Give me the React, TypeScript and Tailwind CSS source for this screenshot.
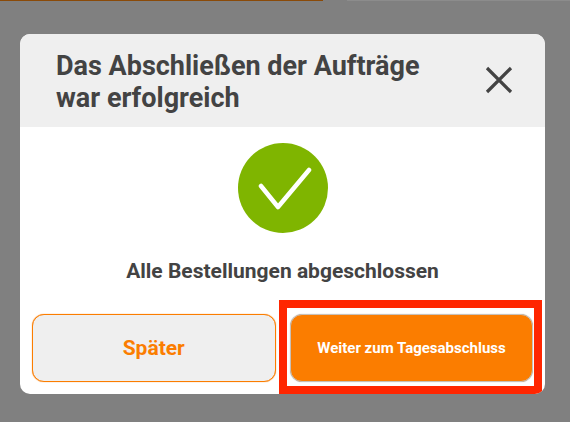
export default function App() {
  return (
    <div className="relative flex h-[422px] w-[570px] flex-col overflow-hidden bg-[#808080] font-['Roboto',sans-serif]">
      <div className="flex h-px shrink-0">
        <div className="w-[323px] bg-[#8a4a08]" />
        <div className="w-[24px]" />
        <div className="flex-1 bg-[#8c8c8c]" />
      </div>
      <div className="ml-5 mt-[33px] flex h-[360px] w-[525px] flex-col overflow-hidden rounded-[10px] bg-white">
        <div className="flex h-[93px] shrink-0 items-center justify-between bg-[#efefef] pl-9 pr-[32px]">
          <h1 className="mt-[2px] w-[390px] text-[27px] font-bold leading-8 text-[#434343]">
            Das Abschließen der Aufträge war erfolgreich
          </h1>
          <svg width="28" height="28" viewBox="0 0 28 28" fill="none" stroke="#434343" strokeWidth="3.2" className="-mt-[1px]">
            <path d="M2 2 26 26M26 2 2 26" />
          </svg>
        </div>
        <div className="flex flex-1 flex-col items-center pt-4">
          <div className="flex h-[90px] w-[90px] items-center justify-center rounded-full bg-[#7fb500]">
            <svg width="58" height="44" viewBox="0 0 58 44" fill="none" stroke="#ffffff" strokeWidth="4.5" strokeLinecap="round" strokeLinejoin="round">
              <path d="M7 20 24 41 55 4" />
            </svg>
          </div>
          <p className="mt-[26px] text-[21px] font-bold leading-6 text-[#434343]">Alle Bestellungen abgeschlossen</p>
        </div>
        <div className="flex shrink-0 gap-[14.5px] pb-3 pl-3 pr-3">
          <button className="h-[68px] w-[244px] rounded-xl border border-[#fb7d00] bg-[#efefef] pt-0.5 text-[21px] font-bold text-[#fb7d00] shadow-[0_0_1px_#fb7d00]">
            Später
          </button>
          <div className="relative">
            <button className="h-[68px] w-[243px] rounded-xl border border-[#c8c0b8] bg-[#fb7d00] text-[15px] font-bold text-white shadow-[0_0_1px_#a8a8a8]">
              Weiter zum Tagesabschluss
            </button>
            <div className="pointer-events-none absolute -bottom-3 -left-[11px] -right-[9px] -top-[14px] border-[8px] border-[#ff2600]" />
          </div>
        </div>
      </div>
    </div>
  );
}
